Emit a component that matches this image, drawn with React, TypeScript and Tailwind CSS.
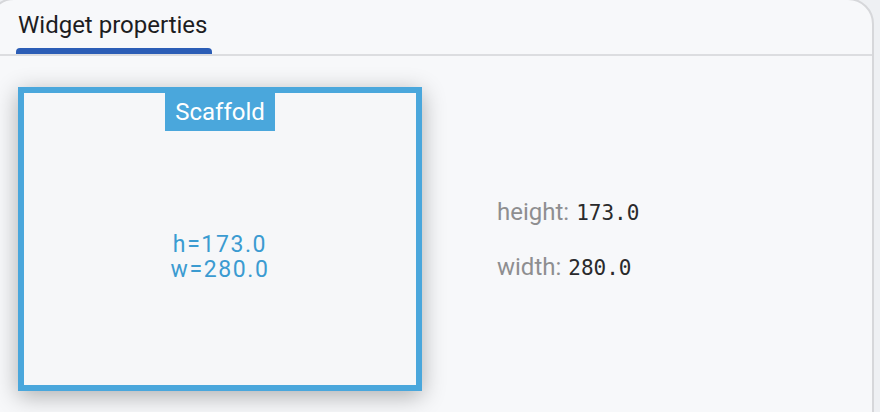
const props = [
  { label: "height:", value: "173.0" },
  { label: "width:", value: "280.0" },
];

export default function App() {
  return (
    <div className="h-[412px] w-[880px] overflow-hidden bg-[#eef0f3] font-['Roboto',sans-serif]">
      <div className="ml-[-12px] mt-[-2px] flex h-[440px] w-[886px] flex-col rounded-t-[26px] border-2 border-[#d6d7da] bg-[#f7f8fa]">
        {/* tab bar */}
        <div className="flex h-[56px] border-b-2 border-[#dcdde0] pl-[26px]">
          <div className="flex flex-col">
            <div className="flex flex-1 items-center px-[2px] pt-[1px] text-[24px] leading-none text-[#1d1d1f]">
              Widget properties
            </div>
            <div className="h-[6px] w-[196px] rounded-t-[4px] bg-[#2b5db6]" />
          </div>
        </div>

        {/* content */}
        <div className="flex items-center pl-[28px] pt-[31px]">
          <div className="flex h-[304px] w-[404px] flex-col border-[6px] border-[#4aa7dc] bg-[#f6f7f9] shadow-[0_5px_22px_rgba(0,0,0,0.3)]">
            <div className="flex justify-center">
              <div className="flex h-[38px] w-[110px] items-center justify-center bg-[#4aa7dc] text-[24px] leading-none text-white">
                Scaffold
              </div>
            </div>
            <div className="flex flex-1 flex-col items-center justify-center pb-[2px] text-[23px] leading-[25px] tracking-[1.6px] text-[#3b9bd1]">
              <span>h=173.0</span>
              <span>w=280.0</span>
            </div>
          </div>

          <div className="ml-[75px] mt-[2px] flex flex-col gap-[30px]">
            {props.map((p) => (
              <div key={p.label} className="flex items-baseline gap-[7px] leading-[24px]">
                <span className="text-[24px] text-[#8e8e90]">{p.label}</span>
                <span className="font-['DejaVu_Sans_Mono',monospace] text-[21px] text-[#2a2a2c]">{p.value}</span>
              </div>
            ))}
          </div>
        </div>
      </div>
    </div>
  );
}
